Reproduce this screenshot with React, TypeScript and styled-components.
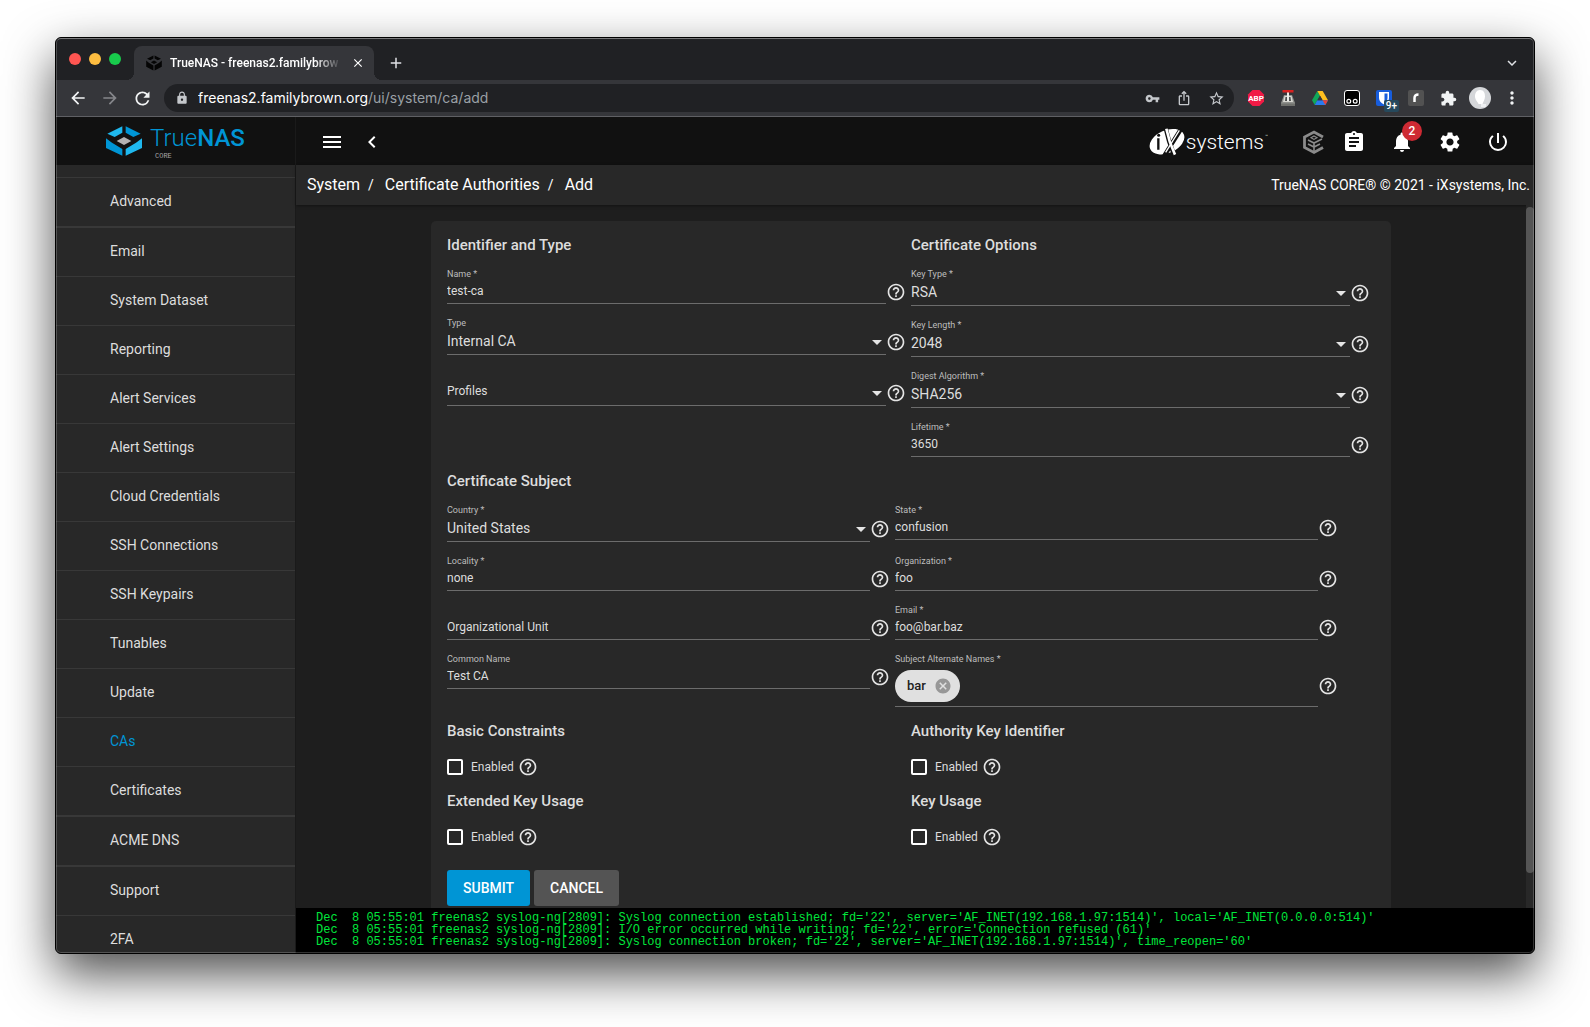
import React, { useState } from 'react';
import type { ReactNode } from 'react';
import styled, { createGlobalStyle, css } from 'styled-components';
import {
  MdAdd,
  MdArrowBack,
  MdArrowForward,
  MdAssignment,
  MdCancel,
  MdChevronLeft,
  MdClose,
  MdExpandMore,
  MdExtension,
  MdHelpOutline,
  MdIosShare,
  MdLock,
  MdMenu,
  MdMoreVert,
  MdNotifications,
  MdPowerSettingsNew,
  MdRefresh,
  MdSettings,
  MdStarBorder,
  MdVpnKey,
} from 'react-icons/md';

const color = {
  strip: '#202124',
  toolbar: '#35363a',
  topbar: '#111111',
  panel: '#282828',
  page: '#1e1e1e',
  line: '#383838',
  fg: '#dddddd',
  fgSoft: '#bdbdbd',
  underline: '#6c6c6c',
  primary: '#0095d5',
};

const GlobalStyle = createGlobalStyle`
  *, *::before, *::after { box-sizing: border-box; }
  body { margin: 0; background: #fff; font-family: Roboto, "Liberation Sans", sans-serif; }
  button, input, select { font-family: inherit; margin: 0; }
  button { padding: 0; border: 0; background: none; color: inherit; cursor: pointer; }
  a { color: inherit; text-decoration: none; }
  svg { display: block; flex: none; }
`;

/* ---------- window ---------- */

const Desktop = styled.div`
  display: flex;
  height: 100vh;
  padding: 37px 55px 73px;
  overflow: hidden;
`;

const Window = styled.div`
  position: relative;
  display: flex;
  flex: 1;
  flex-direction: column;
  min-width: 0;
  overflow: hidden;
  border: 1px solid #000;
  border-radius: 6px;
  background: ${color.strip};
  box-shadow: 0 20px 50px rgba(0, 0, 0, 0.7);

  &::after {
    content: '';
    position: absolute;
    inset: 0;
    border: 1px solid rgba(255, 255, 255, 0.2);
    border-top-color: rgba(255, 255, 255, 0.4);
    border-radius: 5px;
    pointer-events: none;
  }
`;

const TabStrip = styled.div`
  display: flex;
  flex: none;
  align-items: center;
  height: 42px;
  padding: 0 8px 0 13px;
  background: ${color.strip};
  color: #dfe1e5;
`;

const Lights = styled.div`
  display: flex;
  gap: 8px;
  margin-right: 13px;
`;

const Light = styled.button<{ $fill: string }>`
  width: 12px;
  height: 12px;
  border-radius: 50%;
  background: ${(p) => p.$fill};
`;

const Tab = styled.div`
  position: relative;
  display: flex;
  align-items: center;
  align-self: flex-end;
  gap: 8px;
  width: 240px;
  height: 34px;
  padding: 0 8px 0 12px;
  border-radius: 8px 8px 0 0;
  background: ${color.toolbar};

  &::before,
  &::after {
    content: '';
    position: absolute;
    bottom: 0;
    width: 8px;
    height: 8px;
  }
  &::before {
    left: -8px;
    background: radial-gradient(circle at 0 0, transparent 8px, ${color.toolbar} 8px);
  }
  &::after {
    right: -8px;
    background: radial-gradient(circle at 100% 0, transparent 8px, ${color.toolbar} 8px);
  }
`;

const TabTitle = styled.span`
  flex: 1;
  overflow: hidden;
  color: #fff;
  font-size: 12px;
  font-weight: 500;
  line-height: 16px;
  white-space: nowrap;
  mask-image: linear-gradient(to right, #000 84%, transparent);
`;

const StripButton = styled.button<{ $size: number; $end?: boolean }>`
  display: grid;
  place-items: center;
  width: ${(p) => p.$size}px;
  height: 28px;
  margin-left: ${(p) => (p.$end ? 'auto' : '8px')};
  margin-top: 8px;
`;

const CloseTab = styled.button`
  display: grid;
  place-items: center;
  width: 16px;
  height: 16px;
  color: #fff;
`;

const Toolbar = styled.div`
  display: flex;
  flex: none;
  align-items: center;
  height: 37px;
  padding: 0 6px;
  border-bottom: 1px solid #5f6064;
  background: ${color.toolbar};
  color: #f1f3f4;
`;

const ToolButton = styled.button<{ $dim?: boolean }>`
  position: relative;
  display: grid;
  flex: none;
  place-items: center;
  width: 32px;
  height: 28px;
  color: ${(p) => (p.$dim ? '#85868a' : 'inherit')};
`;

const Omnibox = styled.div`
  display: flex;
  flex: 1;
  align-items: center;
  min-width: 0;
  height: 28px;
  margin: 0 6px;
  padding: 0 2px 0 11px;
  border-radius: 14px;
  background: ${color.strip};
  color: #c4c7cb;
`;

const Url = styled.span`
  flex: 1;
  margin-left: 9px;
  overflow: hidden;
  color: #9aa0a6;
  font-family: Inter, Roboto, sans-serif;
  font-size: 14px;
  line-height: 20px;
  white-space: nowrap;

  strong {
    color: #fff;
    font-weight: 400;
  }
`;

const Count = styled.span`
  position: absolute;
  right: 1px;
  bottom: 0;
  padding: 0 2px;
  border-radius: 2px;
  background: #26495c;
  color: #fff;
  font-size: 10px;
  font-weight: 500;
  line-height: 12px;
`;

const Avatar = styled.span`
  display: grid;
  place-items: center;
  width: 22px;
  height: 22px;
  overflow: hidden;
  border-radius: 50%;
  background: #d5d7da;
`;

/* ---------- application shell ---------- */

const Shell = styled.div`
  display: flex;
  flex: 1;
  min-height: 0;
  background: ${color.page};
`;

const Sidebar = styled.aside`
  display: flex;
  flex: none;
  flex-direction: column;
  width: 240px;
  overflow: hidden;
  border-right: 1px solid #1a1a1a;
  background: ${color.panel};
`;

const Brand = styled.a`
  display: flex;
  flex: none;
  align-items: center;
  gap: 8px;
  height: 48px;
  padding-left: 50px;
  background: ${color.topbar};
`;

const BrandText = styled.span`
  display: flex;
  flex-direction: column;
  padding-top: 1px;
  color: ${color.primary};
  font-size: 24px;
  font-weight: 300;
  line-height: 28px;

  b {
    font-weight: 500;
  }
`;

const Edition = styled.small`
  padding-left: 5px;
  color: #a5a5a5;
  font-family: 'Liberation Mono', monospace;
  font-size: 7px;
  line-height: 8px;
`;

const NavList = styled.ul`
  margin: 12px 0 0;
  padding: 0;
  border-top: 1px solid ${color.line};
  list-style: none;
`;

const NavItem = styled.li<{ $thick?: boolean }>`
  border-bottom: ${(p) => (p.$thick ? 2 : 1)}px solid ${color.line};
`;

const NavLink = styled.a<{ $active?: boolean }>`
  display: block;
  padding: 0 0 2px 54px;
  color: ${(p) => (p.$active ? color.primary : color.fg)};
  font-size: 14px;
  line-height: 46px;
`;

const Main = styled.div`
  display: flex;
  flex: 1;
  flex-direction: column;
  min-width: 0;
`;

const TopBar = styled.header`
  display: flex;
  flex: none;
  align-items: center;
  height: 48px;
  padding: 2px 12px 0 16px;
  background: ${color.topbar};
  color: #fff;
`;

const BarButton = styled.button<{ $width: number }>`
  position: relative;
  display: grid;
  flex: none;
  place-items: center;
  width: ${(p) => p.$width}px;
  height: 46px;
`;

const Badge = styled.span`
  position: absolute;
  top: 2px;
  left: 24px;
  width: 20px;
  border-radius: 10px;
  background: #ce2a33;
  font-size: 12px;
  font-weight: 500;
  line-height: 20px;
  text-align: center;
`;

const Vendor = styled.a`
  display: flex;
  align-items: center;
  gap: 1px;
  margin-left: auto;
  margin-right: 28px;
  font-size: 21px;
  font-weight: 300;
  line-height: 26px;

  sup {
    align-self: flex-start;
    font-size: 5px;
    line-height: 16px;
  }
`;

const Crumbs = styled.nav`
  display: flex;
  flex: none;
  align-items: center;
  justify-content: space-between;
  height: 40px;
  padding: 0 4px 1px 11px;
  background: ${color.panel};
  box-shadow: 0 1px 3px rgba(0, 0, 0, 0.4);
  color: #fff;
  font-size: 14px;

  ol {
    display: flex;
    margin: 0;
    padding: 0;
    font-size: 16px;
    list-style: none;
  }
  li + li::before {
    content: '/';
    margin: 0 11px 0 8px;
    font-size: 14px;
  }
`;

const Scroller = styled.div`
  display: flex;
  flex: 1;
  min-height: 0;
  overflow: hidden;
`;

const Content = styled.main`
  flex: 1;
  min-width: 0;
  padding: 16px;
`;

const ScrollTrack = styled.div`
  flex: none;
  width: 8px;
  padding-top: 2px;
  background: ${color.panel};
`;

const ScrollThumb = styled.div`
  height: 95%;
  border-radius: 4px;
  background: #555;
`;

const Log = styled.pre`
  flex: none;
  height: 45px;
  margin: 0;
  padding: 4px 20px;
  overflow: hidden;
  background: #000;
  color: #00e63c;
  font-family: 'Liberation Mono', monospace;
  font-size: 12px;
  line-height: 12px;
`;

/* ---------- form ---------- */

const Card = styled.form`
  display: flex;
  flex-direction: column;
  gap: 16px;
  max-width: 960px;
  margin: 0 auto;
  padding: 16px;
  border-radius: 5px;
  background: ${color.panel};
  color: ${color.fg};
`;

const Columns = styled.div`
  display: grid;
  grid-template-columns: 1fr 1fr;
`;

const Group = styled.section`
  min-width: 0;
`;

const Heading = styled.h2`
  margin: 0 0 15px;
  font-size: 15px;
  font-weight: 500;
  line-height: 16px;
`;

const Stack = styled.div`
  display: grid;
  gap: 13px;
`;

const Pairs = styled.div`
  display: grid;
  grid-template-columns: 1fr 1fr;
  align-items: start;
  row-gap: 13px;
  padding-right: 32px;
`;

const FieldBox = styled.div`
  padding-right: 5px;
`;

const FieldLabel = styled.label`
  display: block;
  height: 12px;
  color: ${color.fgSoft};
  font-size: 9px;
  line-height: 12px;
`;

const Row = styled.div`
  display: flex;
  align-items: center;
`;

const control = css`
  display: block;
  width: 100%;
  padding: 0 0 2px;
  border: 0;
  border-bottom: 1px solid ${color.underline};
  border-radius: 0;
  outline: 0;
  background: transparent;
  color: ${color.fg};
`;

const TextInput = styled.input`
  ${control}
  height: 24px;
  font-size: 12px;

  &::placeholder {
    color: ${color.fg};
    opacity: 1;
  }
`;

const SelectWrap = styled.div`
  position: relative;
  flex: 1;

  &::after {
    content: '';
    position: absolute;
    top: 11px;
    right: 4px;
    border: 5px solid transparent;
    border-top-color: #e4e4e4;
    border-bottom: 0;
    pointer-events: none;
  }
`;

const Select = styled.select<{ $empty?: boolean }>`
  ${control}
  height: 26px;
  padding-bottom: ${(p) => (p.$empty ? 4 : 2)}px;
  appearance: none;
  font-size: ${(p) => (p.$empty ? 12 : 14)}px;
`;

const ChipBox = styled.div`
  display: flex;
  flex: 1;
  align-items: center;
  height: 42px;
  border-bottom: 1px solid ${color.underline};
`;

const Chip = styled.span`
  display: flex;
  align-items: center;
  gap: 8px;
  height: 32px;
  padding: 0 8px 0 12px;
  border-radius: 16px;
  background: #e0e0e0;
  color: #212121;
  font-size: 13px;
  font-weight: 500;

  button {
    color: #979797;
  }
`;

const ChipInput = styled.input`
  flex: 1;
  min-width: 0;
  border: 0;
  outline: 0;
  background: transparent;
  color: ${color.fg};
  font-size: 12px;
`;

const HelpButton = styled.button`
  flex: none;
  width: 20px;
  height: 20px;
  color: #e4e4e4;
`;

const CheckRow = styled.div`
  display: flex;
  align-items: center;
  gap: 4px;
  height: 20px;
  margin-top: 18px;

  label {
    display: flex;
    align-items: center;
    gap: 8px;
    font-size: 12px;
  }
`;

const CheckBox = styled.input`
  width: 16px;
  height: 16px;
  border: 2px solid #fff;
  border-radius: 2px;
  appearance: none;

  &:checked {
    background: ${color.primary};
  }
`;

const Actions = styled.div`
  display: flex;
  gap: 4px;
  margin-top: 7px;
`;

const ActionButton = styled.button<{ $primary?: boolean }>`
  height: 36px;
  padding: 0 16px;
  border-radius: 3px;
  background: ${(p) => (p.$primary ? color.primary : '#545454')};
  color: #fff;
  font-size: 14px;
  font-weight: 500;
`;

/* ---------- drawings ---------- */

const TrueNasMark = () => (
  <svg width="36" height="30" viewBox="18 24 108 90" aria-hidden="true">
    <path fill="#1fb8ee" d="M22 47 67 25v19L44 57zM77 93l31-19 18-13v29l-49 23z" />
    <path fill="#0095d5" d="M122 47 77 25v19l23 13zM67 93 36 74 18 61v29l49 23z" />
    <path fill="#b4b2b2" d="m50 69 22-12 22 12-22 12z" />
  </svg>
);

const Favicon = () => (
  <svg width="16" height="16" viewBox="0 0 16 16" aria-hidden="true">
    <path
      d="M1 3.8 7.4.5v3L4.2 5.2zM15 3.8 8.6.5v3l3.2 1.700zM.2 5.6l2.600 2.200 4.600 2.800v5L.2 11.8zM15.8 5.6l-2.600 2.200-4.600 2.800v5l7.200-3.800zM4.8 7.2 8 5.4l3.200 1.800L8 9z"
      fill="#050505"
    />
  </svg>
);

const IxMark = () => (
  <svg width="36" height="28" viewBox="12 143 108 84" aria-hidden="true">
    <ellipse cx="66" cy="184" rx="55" ry="34" transform="rotate(-24 66 184)" fill="#fff" />
    <path d="M62 143q8 40 26 82M108 146 58 226" stroke="#111" strokeWidth="13" fill="none" />
    <path d="M64 145q8 40 26 78" stroke="#fff" strokeWidth="8" fill="none" />
    <path d="M103 150 62 216" stroke="#fff" strokeWidth="4" fill="none" />
    <path d="M40 174v34" stroke="#111" strokeWidth="7" />
    <circle cx="41" cy="165" r="4.500" fill="#111" />
  </svg>
);

const CommandMark = () => (
  <svg width="24" height="26" viewBox="0 0 24 26" fill="none" stroke="#8b8b8b" aria-hidden="true">
    <path d="M22 8 13 3 3.500 8v10.500l9.500 5 9-5" strokeWidth="2.800" />
    <path d="m13 7 3 1.700-3 1.700-3-1.700z" strokeWidth="1.200" />
    <path
      d="M7 11l6 3 8-4M7 15l6 3 6-3M13 14v8"
      strokeWidth="1.600"
    />
  </svg>
);

const Abp = () => (
  <svg width="18" height="18" viewBox="0 0 18 18" aria-hidden="true">
    <path d="M5.500 1h7L17 5.500v7L12.500 17h-7L1 12.500v-7z" fill="#f11a45" />
    <text
      x="9"
      y="12"
      fill="#fff"
      fontFamily="Roboto, sans-serif"
      fontSize="8"
      fontWeight="700"
      textAnchor="middle"
    >
      ABP
    </text>
  </svg>
);

const Drill = () => (
  <svg width="16" height="16" viewBox="0 0 16 16" aria-hidden="true">
    <path d="M4 5h8l3 8v3H1v-3z" fill="#8f908c" />
    <path d="M4.500 6h7l1.500 6H3z" fill="#d8d8d2" />
    <path d="M5.500 7h1.500v4H5zM9 7h1.500l.5 4H9z" fill="#4b4d4d" />
    <path d="M7 1h2v10H7z" fill="#ecece8" />
    <path d="M2.500 0h11v2.500h-11z" fill="#d9201f" />
    <path d="M1 13.500h14V16H1z" fill="#6f706c" />
  </svg>
);

const Drive = () => (
  <svg width="16" height="14" viewBox="0 0 16 14" aria-hidden="true">
    <path d="M5.300 0 8 4.700 2.700 14 0 9.300z" fill="#10a75a" />
    <path d="M5.300 0h5.400L16 9.300h-5.400z" fill="#ffc01f" />
    <path d="M5.300 9.300H16L13.300 14H2.700z" fill="#2a7bf0" />
    <path d="M10.600 9.300H16L13.300 14z" fill="#e74336" />
    <path d="M8 4.700 5.300 9.300h5.300z" fill="#35363a" />
  </svg>
);

const Monkey = () => (
  <svg width="16" height="16" viewBox="0 0 16 16" aria-hidden="true">
    <rect x=".5" y=".5" width="15" height="15" rx="2.500" fill="#000" stroke="#fff" />
    <g fill="none" stroke="#fff" strokeWidth="1.200">
      <circle cx="4.800" cy="11.200" r="1.900" />
      <circle cx="11.200" cy="11.200" r="1.900" />
    </g>
  </svg>
);

const Vault = () => (
  <svg width="16" height="16" viewBox="0 0 16 16" aria-hidden="true">
    <rect width="16" height="16" rx="2" fill="#175ddc" />
    <path d="M3 2h10v6c0 3-2 5-5 6.500C5 13 3 11 3 8z" fill="#fff" />
    <path d="M8.500 3.500h3V8c0 2-1.200 3.500-3 4.500z" fill="#175ddc" />
  </svg>
);

const Hook = () => (
  <svg width="16" height="16" viewBox="0 0 16 16" aria-hidden="true">
    <rect width="16" height="16" rx="2" fill="#525252" />
    <path d="M6.500 12V8q0-3.500 4-3.500" stroke="#fff" strokeWidth="2.500" fill="none" />
  </svg>
);

const Face = () => (
  <svg width="22" height="22" viewBox="0 0 22 22" aria-hidden="true">
    <path d="M11 3c4 0 5 3 5 6.500S14 15 13.500 17H9.500C9 15 6 13 6 9.500S7.500 3 11 3z" fill="#fff" />
    <path d="M12 17h5v3h-5z" fill="#eef0f2" />
  </svg>
);

/* ---------- parts ---------- */

const Help = ({ topic }: { topic: string }) => (
  <HelpButton type="button" aria-label={`Help: ${topic}`}>
    <MdHelpOutline size={20} />
  </HelpButton>
);

type FieldProps = {
  id: string;
  label: string;
  required?: boolean;
  floating?: boolean;
  children: ReactNode;
};

const Field = ({ id, label, required, floating, children }: FieldProps) => (
  <FieldBox>
    <FieldLabel htmlFor={id} aria-label={label}>
      {floating ? '' : label + (required ? ' *' : '')}
    </FieldLabel>
    <Row>
      {children}
      <Help topic={label} />
    </Row>
  </FieldBox>
);

type InputProps = { id: string; label: string; value?: string; required?: boolean };

const TextField = ({ id, label, value = '', required }: InputProps) => (
  <Field id={id} label={label} required={required} floating={!value}>
    <TextInput id={id} defaultValue={value} placeholder={value ? undefined : label} />
  </Field>
);

const SelectField = ({ id, label, value = '', required }: InputProps) => (
  <Field id={id} label={label} required={required} floating={!value}>
    <SelectWrap>
      <Select id={id} $empty={!value} defaultValue={value}>
        <option value={value}>{value || label}</option>
      </Select>
    </SelectWrap>
  </Field>
);

const CheckGroup = ({ id, title }: { id: string; title: string }) => {
  const [on, setOn] = useState(false);
  return (
    <Group>
      <Heading>{title}</Heading>
      <CheckRow>
        <label htmlFor={id}>
          <CheckBox id={id} type="checkbox" checked={on} onChange={() => setOn(!on)} />
          Enabled
        </label>
        <Help topic={title} />
      </CheckRow>
    </Group>
  );
};

const navItems = [
  { name: 'Advanced', thick: true },
  { name: 'Email' },
  { name: 'System Dataset' },
  { name: 'Reporting' },
  { name: 'Alert Services' },
  { name: 'Alert Settings' },
  { name: 'Cloud Credentials' },
  { name: 'SSH Connections' },
  { name: 'SSH Keypairs' },
  { name: 'Tunables' },
  { name: 'Update' },
  { name: 'CAs' },
  { name: 'Certificates', thick: true },
  { name: 'ACME DNS', thick: true },
  { name: 'Support' },
  { name: '2FA' },
];

const logLines = [
  "Dec  8 05:55:01 freenas2 syslog-ng[2809]: Syslog connection established; fd='22', server='AF_INET(192.168.1.97:1514)', local='AF_INET(0.0.0.0:514)'",
  "Dec  8 05:55:01 freenas2 syslog-ng[2809]: I/O error occurred while writing; fd='22', error='Connection refused (61)'",
  "Dec  8 05:55:01 freenas2 syslog-ng[2809]: Syslog connection broken; fd='22', server='AF_INET(192.168.1.97:1514)', time_reopen='60'",
];

const BrowserChrome = () => (
  <>
    <TabStrip>
      <Lights>
        <Light $fill="#ff5652" aria-label="Close window" />
        <Light $fill="#fdbd40" aria-label="Minimize window" />
        <Light $fill="#18cb4c" aria-label="Zoom window" />
      </Lights>
      <Tab>
        <Favicon />
        <TabTitle>TrueNAS - freenas2.familybrow</TabTitle>
        <CloseTab aria-label="Close tab">
          <MdClose size={14} />
        </CloseTab>
      </Tab>
      <StripButton $size={28} aria-label="New tab">
        <MdAdd size={18} />
      </StripButton>
      <StripButton $size={28} $end aria-label="Search tabs">
        <MdExpandMore size={18} />
      </StripButton>
    </TabStrip>
    <Toolbar>
      <ToolButton aria-label="Back"><MdArrowBack size={20} /></ToolButton>
      <ToolButton $dim aria-label="Forward"><MdArrowForward size={20} /></ToolButton>
      <ToolButton aria-label="Reload"><MdRefresh size={21} /></ToolButton>
      <Omnibox>
        <MdLock size={14} />
        <Url>
          <strong>freenas2.familybrown.org</strong>/ui/system/ca/add
        </Url>
        <ToolButton aria-label="Passwords"><MdVpnKey size={15} /></ToolButton>
        <ToolButton aria-label="Share"><MdIosShare size={16} /></ToolButton>
        <ToolButton aria-label="Bookmark"><MdStarBorder size={17} /></ToolButton>
      </Omnibox>
      <ToolButton aria-label="Ad blocker"><Abp /></ToolButton>
      <ToolButton aria-label="Debugger"><Drill /></ToolButton>
      <ToolButton aria-label="Drive"><Drive /></ToolButton>
      <ToolButton aria-label="Scripts"><Monkey /></ToolButton>
      <ToolButton aria-label="Password vault">
        <Vault />
        <Count>9+</Count>
      </ToolButton>
      <ToolButton aria-label="Reader"><Hook /></ToolButton>
      <ToolButton aria-label="Extensions"><MdExtension size={17} /></ToolButton>
      <ToolButton aria-label="Profile">
        <Avatar><Face /></Avatar>
      </ToolButton>
      <ToolButton aria-label="Menu"><MdMoreVert size={20} /></ToolButton>
    </Toolbar>
  </>
);

const CaForm = () => (
  <Card onSubmit={(e) => e.preventDefault()}>
    <Columns>
      <Group>
        <Heading>Identifier and Type</Heading>
        <Stack>
          <TextField id="name" label="Name" value="test-ca" required />
          <SelectField id="type" label="Type" value="Internal CA" />
          <SelectField id="profiles" label="Profiles" />
        </Stack>
      </Group>
      <Group>
        <Heading>Certificate Options</Heading>
        <Stack>
          <SelectField id="key-type" label="Key Type" value="RSA" required />
          <SelectField id="key-length" label="Key Length" value="2048" required />
          <SelectField id="digest" label="Digest Algorithm" value="SHA256" required />
          <TextField id="lifetime" label="Lifetime" value="3650" required />
        </Stack>
      </Group>
    </Columns>
    <Group>
      <Heading>Certificate Subject</Heading>
      <Pairs>
        <SelectField id="country" label="Country" value="United States" required />
        <TextField id="state" label="State" value="confusion" required />
        <TextField id="locality" label="Locality" value="none" required />
        <TextField id="organization" label="Organization" value="foo" required />
        <TextField id="unit" label="Organizational Unit" />
        <TextField id="email" label="Email" value="foo@bar.baz" required />
        <TextField id="common-name" label="Common Name" value="Test CA" />
        <Field id="san" label="Subject Alternate Names" required>
          <ChipBox>
            <Chip>
              bar
              <button type="button" aria-label="Remove bar">
                <MdCancel size={18} />
              </button>
            </Chip>
            <ChipInput id="san" />
          </ChipBox>
        </Field>
      </Pairs>
    </Group>
    <Columns>
      <CheckGroup id="basic" title="Basic Constraints" />
      <CheckGroup id="authority" title="Authority Key Identifier" />
    </Columns>
    <Columns>
      <CheckGroup id="extended" title="Extended Key Usage" />
      <CheckGroup id="usage" title="Key Usage" />
    </Columns>
    <Actions>
      <ActionButton type="submit" $primary>SUBMIT</ActionButton>
      <ActionButton type="button">CANCEL</ActionButton>
    </Actions>
  </Card>
);

export default function App() {
  return (
    <>
      <GlobalStyle />
      <Desktop>
        <Window>
          <BrowserChrome />
          <Shell>
            <Sidebar>
              <Brand href="#dashboard" aria-label="TrueNAS CORE">
                <TrueNasMark />
                <BrandText>
                  <span>True<b>NAS</b></span>
                  <Edition>CORE</Edition>
                </BrandText>
              </Brand>
              <nav aria-label="System">
                <NavList>
                  {navItems.map((item) => (
                    <NavItem key={item.name} $thick={item.thick}>
                      <NavLink href="#system" $active={item.name === 'CAs'}>
                        {item.name}
                      </NavLink>
                    </NavItem>
                  ))}
                </NavList>
              </nav>
            </Sidebar>
            <Main>
              <TopBar>
                <BarButton $width={40} aria-label="Toggle menu"><MdMenu size={24} /></BarButton>
                <BarButton $width={40} aria-label="Collapse menu"><MdChevronLeft size={24} /></BarButton>
                <Vendor href="#ixsystems" aria-label="iXsystems">
                  <IxMark />
                  systems
                  <sup>™</sup>
                </Vendor>
                <BarButton $width={34} aria-label="TrueCommand"><CommandMark /></BarButton>
                <BarButton $width={48} aria-label="Tasks"><MdAssignment size={24} /></BarButton>
                <BarButton $width={48} aria-label="Notifications">
                  <MdNotifications size={24} />
                  <Badge>2</Badge>
                </BarButton>
                <BarButton $width={48} aria-label="Settings"><MdSettings size={24} /></BarButton>
                <BarButton $width={48} aria-label="Power"><MdPowerSettingsNew size={24} /></BarButton>
              </TopBar>
              <Crumbs aria-label="Breadcrumb">
                <ol>
                  <li><a href="#system">System</a></li>
                  <li><a href="#ca">Certificate Authorities</a></li>
                  <li><a href="#add">Add</a></li>
                </ol>
                <span>TrueNAS CORE® © 2021 - iXsystems, Inc.</span>
              </Crumbs>
              <Scroller>
                <Content>
                  <CaForm />
                </Content>
                <ScrollTrack>
                  <ScrollThumb />
                </ScrollTrack>
              </Scroller>
              <Log role="log">{logLines.join('\n')}</Log>
            </Main>
          </Shell>
        </Window>
      </Desktop>
    </>
  );
}
